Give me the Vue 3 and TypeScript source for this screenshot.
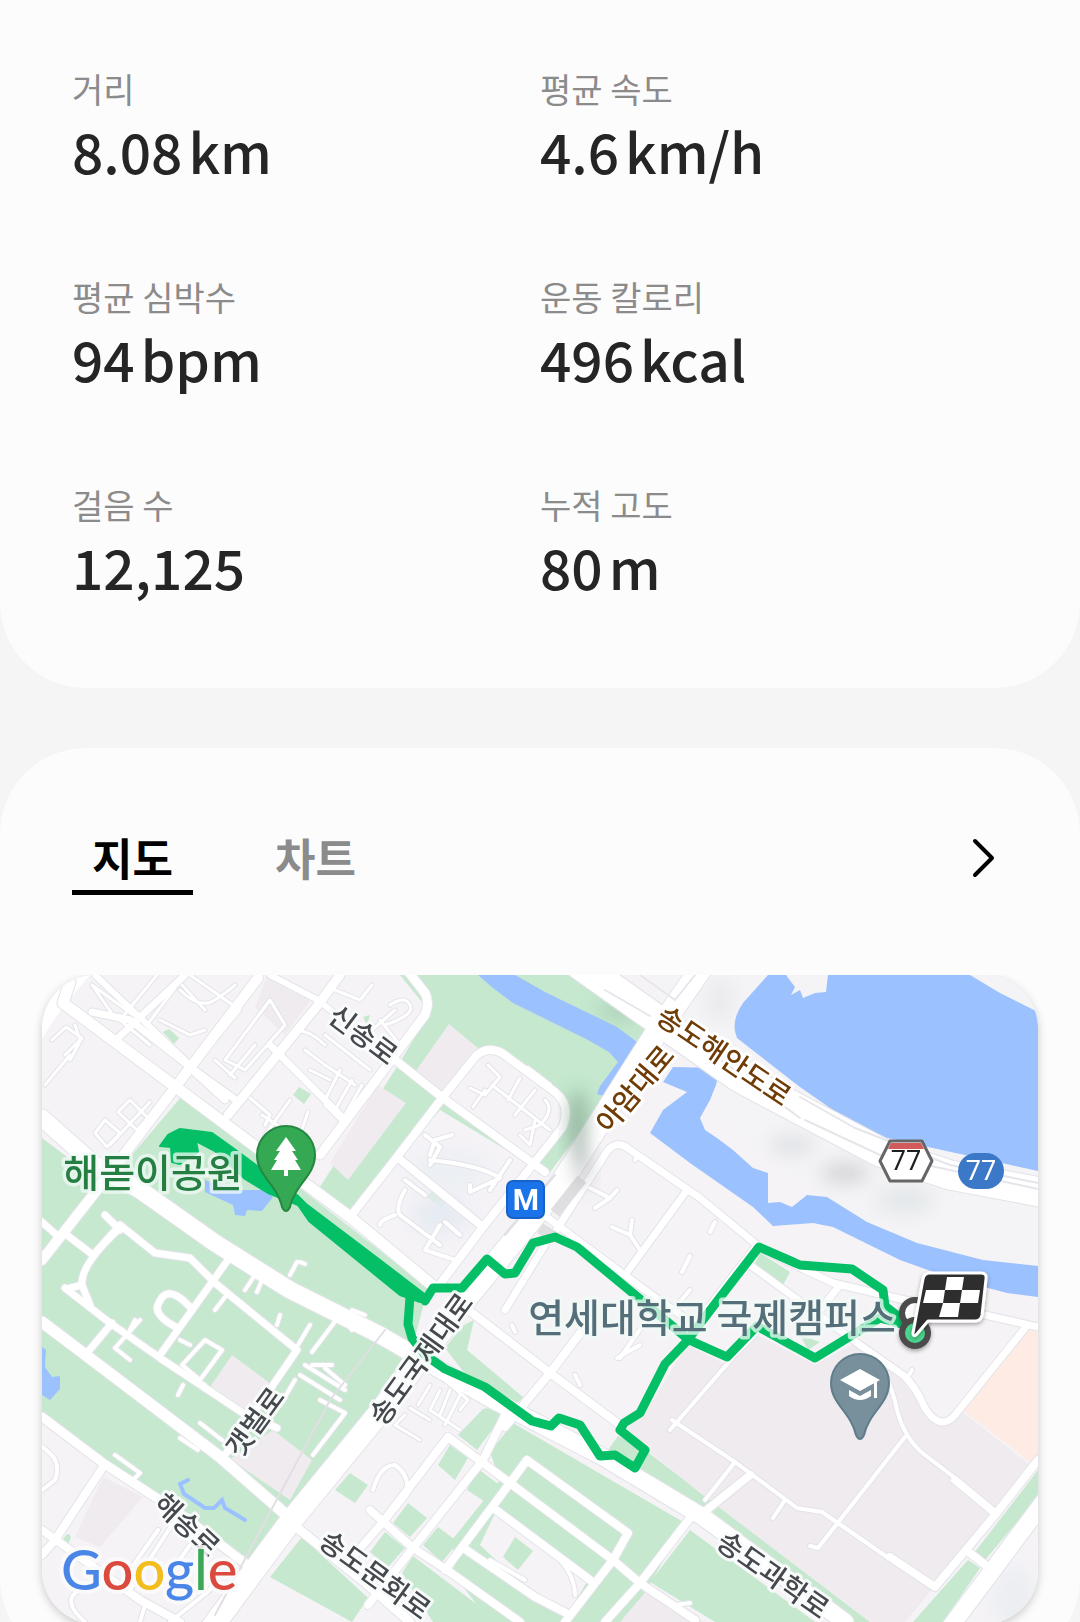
<script setup lang="ts">
import { ref } from 'vue'

interface Metric { label: string; value: string; unit?: string }
interface Road { d: string; w: number }
interface StreetLabel { text: string; x: number; y: number; angle: number; major?: boolean }

const metrics: Metric[] = [
  { label: '거리', value: '8.08', unit: 'km' },
  { label: '평균 속도', value: '4.6', unit: 'km/h' },
  { label: '평균 심박수', value: '94', unit: 'bpm' },
  { label: '운동 칼로리', value: '496', unit: 'kcal' },
  { label: '걸음 수', value: '12,125' },
  { label: '누적 고도', value: '80', unit: 'm' },
]

const tabs = ['지도', '차트']
const activeTab = ref('지도')

const greens: string[] = [
  'M400 975H590L655 1030L548 1175L440 1110L350 1214L318 1190L400 1062L430 1012Z',
  'M182 1096L428 1288L413 1345L290 1520L250 1567L42 1416V1138L95 1178L125 1163Z',
  'M445 1348L462 1326L474 1320L467 1350L523 1397L512 1410L470 1380Z',
  'M645 1450L870 1622H838L640 1482L608 1450L618 1436Z',
  'M483 1409Q490 1406 503 1415L477 1450L458 1435Z',
  'M513 1423L685 1523L628 1622L540 1622L448 1545L500 1480L490 1452Z',
  'M450 1445L468 1458L455 1480L438 1465ZM477 1468L502 1487L487 1503L467 1490ZM408 1503L427 1518L410 1537L393 1523ZM438 1527L458 1542L442 1562L423 1545ZM385 1532L405 1548L388 1567L370 1552Z',
  'M460 1551L565 1622H490L452 1572ZM413 1556L500 1622H433L402 1573Z',
  'M690 1530L815 1622H715L650 1582Z',
  'M302 1537L368 1598L352 1622L270 1577ZM350 1473L368 1485L355 1503L335 1490Z',
  'M1038 1470V1497L985 1560L975 1552ZM968 1560L980 1568L943 1622H913Z',
  'M163 1032L169 1029L179 1038L174 1044ZM299 1087L311 1094L304 1104L293 1095ZM433 1190L446 1200L442 1208L427 1197ZM363 1017L370 1015L367 1025Z',
  'M760 1253L790 1272L783 1285L754 1265ZM800 1335L820 1342L808 1350Z',
  'M63 1540Q68 1530 71 1537L68 1545L64 1550Z',
]

const blocks: string[] = [
  'M449 1024L478 1048L442 1096L415 1072Z',
  'M378 1085L406 1103L348 1180L330 1163Z',
  'M267 976L311 1000L285 1035L255 1007Z',
  'M232 1355L275 1387L248 1418L210 1387Z',
  'M273 1430L312 1460L290 1500L230 1459Z',
  'M103 1477L143 1497L100 1547L75 1537Z',
  'M687 1345L727 1365L757 1335L815 1365L860 1340L900 1377L935 1425L960 1410L1030 1465L930 1592L905 1622H870L700 1493L645 1448L625 1430L650 1405Z',
  'M647 1590L705 1622H620Z',
]

const lilacs: string[] = [
  'M443 1096L476 1054Q487 1045 502 1052L556 1092Q572 1106 562 1128L534 1166Z',
  'M495 1513L545 1545L588 1580L570 1610L530 1592L480 1545Z',
]

const roads: Road[] = [
  { d: 'M157 975L120 1020L150 1045M175 988L147 1025L92 985M92 985L115 1018M75 1025L80 1040L65 1055M52 1040L66 1027L82 1038L70 1060M70 1055L45 1085M150 1102L110 1145M130 1100L148 1118L137 1130L118 1112ZM105 1120L120 1133L107 1147L95 1133Z', w: 3 },
  { d: 'M190 975L240 1010L215 1040M182 985L205 1010M160 1020L190 1035L205 1030M270 1000L225 1060L245 1070L285 1025ZM215 1060L235 1078M180 990Q200 1010 215 1000T235 985M255 1045L230 1075M335 990L360 1000L372 985M295 1030Q310 1030 325 1045M305 1050L325 1065L355 1085M325 1035L370 1070M310 1070L330 1080M340 1070L325 1100M352 1080L335 1110M362 1085L345 1115', w: 3 },
  { d: 'M250 1098L270 1115L265 1125M290 1100L265 1135M262 1115L300 1140M308 1112L300 1135M325 1105L340 1120M390 1005Q405 995 410 1005T385 1025M395 1010L372 1030M380 1020L400 1045', w: 3 },
  { d: 'M488 1065L500 1077L485 1095L470 1088M492 1085L550 1130M520 1078L508 1100M535 1090L515 1115M545 1100Q555 1110 540 1125L525 1130M485 1090L473 1107M535 1120L530 1145L520 1135', w: 3 },
  { d: 'M425 1135L440 1147L430 1165M430 1160Q480 1165 500 1178M452 1135L435 1140L430 1155M500 1178L470 1192V1185M510 1160L490 1190M405 1190Q395 1208 400 1215L440 1245M405 1180L425 1195M395 1215Q380 1220 380 1225M440 1225L425 1250L455 1260M445 1222L460 1235', w: 4 },
  { d: 'M590 1188L610 1198L595 1208M610 1198L617 1190M612 1227L630 1235L640 1250M630 1235L632 1220M715 1222L710 1232M690 1256L682 1272M635 1160L638 1155', w: 4 },
  { d: 'M225 1297L215 1310M255 1275L245 1290M262 1280L257 1292M297 1262L290 1275M300 1262L305 1264M280 1315L277 1325M310 1325L298 1345M340 1315L312 1352M345 1320L352 1330M352 1310L365 1315M160 1360L205 1385M140 1320L115 1348L130 1360M135 1320L130 1330M205 1340L222 1350L200 1380L182 1365ZM180 1340L190 1345M183 1385L178 1395M300 1375L340 1400M305 1365L345 1390M312 1365L332 1365M325 1368L345 1385M295 1380L280 1405M345 1413L313 1455M320 1400L345 1413M200 1423L222 1440M180 1438L198 1450M115 1455L140 1473L133 1480', w: 4 },
  { d: 'M440 1390L430 1410L460 1430M450 1390L440 1415M460 1395L445 1425M430 1385L418 1405M405 1415L395 1425L420 1440M410 1408L430 1420M445 1380L468 1400L460 1410', w: 3 },
  { d: 'M373 1490Q380 1465 395 1465Q410 1475 407 1495L395 1510M520 1530L545 1545Q575 1570 575 1595M490 1560L525 1580M640 1345L617 1358M575 1375L580 1385M512 1325L515 1332M675 1605L690 1603', w: 4 },
  { d: 'M670 1313L690 1290M650 1315L620 1358M670 1430L735 1355L760 1330M672 1420L735 1462L797 1508L822 1512L887 1557M905 1437L840 1520L818 1548L810 1546M885 1375Q893 1390 897 1410Q905 1440 925 1455L955 1478M785 1500L773 1518M735 1462L705 1500M908 1377L912 1370', w: 4 },
  { d: 'M85 1622Q60 1600 80 1590M130 1570L158 1530M165 1580L190 1545M42 1447Q63 1460 55 1480L42 1490M130 1590L175 1520M220 1560L210 1590L170 1622M140 1622L145 1605M375 1330L340 1310', w: 4 },
  { d: 'M70 982L63 1003L177 1088L350 1217L432 1285', w: 11 },
  { d: 'M92 1012L130 1020L190 1067L236 1100M270 1045L342 1117M192 1070L225 1100', w: 7 },
  { d: 'M258 978L177 1085L97 1190L42 1260', w: 10 },
  { d: 'M340 975L318 1005L228 1115', w: 9 },
  { d: 'M185 975L118 1038', w: 7 },
  { d: 'M270 975L318 1000L355 1030M95 975L190 1065', w: 6 },
  { d: 'M403 965L425 993Q430 1002 425 1015L380 1075L320 1155', w: 9 },
  { d: 'M380 1048L443 1098L545 1172', w: 8 },
  { d: 'M350 1217L397 1157L443 1097L475 1057Q487 1045 502 1053L555 1092Q572 1106 562 1128L483 1227L437 1288M397 1157L483 1227', w: 8 },
  { d: 'M528 1068L550 1085', w: 4 },
  { d: 'M555 1232L608 1150Q617 1141 626 1147L700 1198L757 1245M548 1218L645 1290L685 1318M685 1193L625 1275M545 1245L505 1310', w: 7 },
  { d: 'M462 1305L550 1373L620 1425M590 1320L550 1373L505 1427', w: 8 },
  { d: 'M448 1437L510 1483L613 1560L640 1583L695 1620M370 1510L413 1548L447 1570L520 1622M505 1415L483 1460L413 1548L368 1605M448 1437L383 1522L350 1560M527 1460L510 1483L445 1570M527 1460L628 1533L613 1560L565 1622M492 1507L590 1580M462 1547L535 1597L570 1615M690 1518L640 1583L605 1622', w: 8 },
  { d: 'M42 1322L83 1353L220 1457L283 1512', w: 11 },
  { d: 'M42 1417L103 1463L175 1510L250 1567', w: 9 },
  { d: 'M65 1288L110 1323L163 1360L243 1413L277 1428M230 1257L160 1355M190 1307Q165 1280 157 1308Q158 1318 176 1327M112 1323L87 1353', w: 7 },
  { d: 'M63 1232L93 1255L120 1225L155 1253L190 1258L215 1283L297 1350L225 1455M120 1228Q80 1265 82 1285L70 1288M82 1285L90 1305M105 1215L120 1230M42 1222L60 1238', w: 7 },
  { d: 'M103 1467L55 1540L42 1555M42 1530L140 1600L180 1622', w: 8 },
  { d: 'M750 1265L860 1345L903 1375Q915 1385 925 1408Q940 1432 955 1415L1025 1328', w: 7 },
  { d: 'M757 1245L685 1338M757 1247L833 1283L905 1300L985 1315L1038 1327M840 1285L820 1310', w: 7 },
  { d: 'M1038 1460L995 1515L935 1587L890 1557M995 1513L955 1480M970 1553L988 1567M750 1475L703 1513', w: 8 },
  { d: 'M1045 1500L948 1630', w: 17 },
  { d: 'M42 1118L95 1165L140 1190L215 1243L290 1290L380 1335L487 1397L603 1457L703 1517L845 1622', w: 17 },
  { d: 'M707 960L655 1035L560 1185L463 1302L380 1412L290 1522L210 1630', w: 22 },
  { d: 'M290 1522L368 1585L410 1622', w: 9 },
  { d: 'M580 965L655 1018L740 1078L810 1115L880 1152L950 1175L1045 1193', w: 29 },
]

const route = 'M425 1301L433 1288L462 1288L487 1259L505 1274L515 1273L533 1243L555 1237L577 1247L640 1299L689 1340L727 1357L757 1326L815 1358L880 1318L912 1327L885 1306L883 1290L852 1269L800 1265L759 1247L718 1300L687 1341L665 1364L640 1413L624 1423L620 1430L645 1450L635 1468L615 1455L600 1456L580 1425L559 1418L551 1426L532 1421L485 1387L445 1369L425 1355L412 1338L408 1324L410 1297'
const routeBand = 'M160 1146L168 1135L180 1129L212 1133L233 1148L287 1188L297 1195L306 1204L380 1260L427 1296L420 1302L400 1295L309 1221L298 1205L268 1193L245 1179L215 1151L196 1141L198 1152L180 1164L172 1162L171 1147Z'

const streets: StreetLabel[] = [
  { text: '신송로', x: 363, y: 1035, angle: 37 },
  { text: '아암대로', x: 635, y: 1089, angle: -50, major: true },
  { text: '송도해안도로', x: 724, y: 1056, angle: 34, major: true },
  { text: '송도국제대로', x: 421, y: 1359, angle: -54 },
  { text: '갯벌로', x: 255, y: 1422, angle: -54 },
  { text: '해송로', x: 187, y: 1525, angle: 43 },
  { text: '송도문화로', x: 375, y: 1575, angle: 36 },
  { text: '송도과학로', x: 773, y: 1575, angle: 35 },
]
</script>

<template>
  <main class="page">
    <section class="card metrics-card">
      <dl class="metrics">
        <div v-for="m in metrics" :key="m.label" class="metric">
          <dt>{{ m.label }}</dt>
          <dd>{{ m.value }}<span v-if="m.unit" class="unit">{{ m.unit }}</span></dd>
        </div>
      </dl>
    </section>

    <section class="card map-card">
      <header class="bar">
        <div class="tabs" role="tablist">
          <button
            v-for="t in tabs"
            :key="t"
            type="button"
            role="tab"
            class="tab"
            :class="{ active: activeTab === t }"
            :aria-selected="activeTab === t"
            @click="activeTab = t"
          >{{ t }}</button>
        </div>
        <button type="button" class="more" aria-label="자세히">
          <svg viewBox="0 0 24 42" width="24" height="42" fill="none" stroke="#000" stroke-width="4" stroke-linecap="round" stroke-linejoin="round"><path d="M3 4L20 21L3 38" /></svg>
        </button>
      </header>

      <div class="map">
        <svg viewBox="42 975 996 649" role="img" aria-label="지도">
          <defs>
            <filter id="soft" x="-50%" y="-50%" width="200%" height="200%"><feGaussianBlur stdDeviation="9" /></filter>
            <filter id="drop" x="-30%" y="-30%" width="160%" height="160%"><feDropShadow dx="0" dy="2" stdDeviation="2" flood-opacity=".35" /></filter>
          </defs>
          <rect x="42" y="975" width="996" height="649" fill="#f6f3f7" />
          <path d="M655 975H1038V1300L900 1260L700 1100Z" fill="#f4f3f5" />
          <path v-for="d in greens" :key="d" :d="d" fill="#c5e8cf" />
          <path v-for="d in lilacs" :key="d" :d="d" fill="#f6f3f7" />
          <path d="M515 1537L533 1551L518 1570L503 1557Z" fill="#c5e8cf" />
          <path v-for="d in blocks" :key="d" :d="d" fill="#efebef" />
          <path d="M1027 1328L1038 1332V1462L1030 1462L963 1410Z" fill="#fdebe4" />

          <g filter="url(#soft)">
            <ellipse cx="620" cy="1010" rx="22" ry="12" fill="#9fc2ab" opacity=".5" />
            <ellipse cx="845" cy="1173" rx="24" ry="10" fill="#cfd0d4" opacity=".9" />
            <ellipse cx="792" cy="1145" rx="22" ry="9" fill="#dcdfe3" opacity=".9" />
            <ellipse cx="905" cy="1200" rx="28" ry="14" fill="#e3e8ea" />
            <ellipse cx="440" cy="1215" rx="30" ry="20" fill="#e6ebf2" />
            <ellipse cx="450" cy="1170" rx="38" ry="20" fill="#ebeff3" />
            <ellipse cx="720" cy="1000" rx="12" ry="20" fill="#e8e9eb" />
            <ellipse cx="1015" cy="1600" rx="22" ry="34" fill="#ebeef2" />
          </g>

          <g fill="#9cc1ff">
            <path d="M478 975H515L545 992L617 1027L645 1048L622 1074L604 1096L597 1094L600 1086L618 1062L609 1052L588 1040L513 1003L493 988Z" />
            <path d="M673 1067L720 1068L716 1085L710 1100L700 1118L705 1130L717 1138L733 1150L753 1168L768 1173V1203L780 1202L792 1207L807 1195L827 1197L867 1222L917 1243L983 1260L1038 1266V1297L1007 1293L950 1278L900 1260L833 1227L813 1223L773 1226L753 1207L700 1170L690 1163L650 1133L663 1110L687 1092L663 1082Z" />
            <path d="M768 975L743 1003Q730 1022 737 1038L800 1087L850 1122L887 1138L1038 1171V1012L1000 993L970 975Z" />
            <path d="M205 1180L228 1188L240 1190L265 1190L273 1197L262 1211L247 1210L245 1216L235 1215L233 1205L205 1192Z" />
            <path d="M42 1347L46 1350L45 1367L52 1377L60 1376V1389L50 1400L42 1395Z" />
          </g>
          <path d="M188 1480L180 1484L184 1494L205 1508L214 1508L222 1500L225 1508L245 1520" fill="none" stroke="#9cc1ff" stroke-width="4" stroke-linecap="round" />
          <path d="M786 975L795 987L791 995L800 990L803 998L815 993L826 992L828 975Z" fill="#f4f3f5" />
          <path d="M42 975H90L62 1008L42 1038Z" fill="#fff" />

          <g fill="none" stroke-linecap="round" stroke-linejoin="round">
            <path v-for="r in roads" :key="'c' + r.d" :d="r.d" :stroke-width="r.w + 2" stroke="#e3e3e9" />
            <path v-for="r in roads" :key="r.d" :d="r.d" :stroke-width="r.w" stroke="#fff" />
            <path d="M800 1097L855 1128L950 1165L1038 1183M805 1120L880 1155L1038 1189M605 990L650 1016M700 1045L800 1118M640 975L675 1000L695 975" stroke="#e6e5ec" stroke-width="2" />
            <path d="M555 1213L582 1179M540 1228L556 1238" stroke="#dfdfe1" stroke-width="11" stroke-linecap="butt" />
            <path d="M555 1175L505 1235M385 1330L330 1400L215 1615" stroke="#e2dfe4" stroke-width="2" />
          </g>
          <g filter="url(#soft)">
            <ellipse cx="578" cy="1125" rx="9" ry="36" fill="#6f8f7d" opacity=".6" />
            <ellipse cx="582" cy="1165" rx="8" ry="22" fill="#9b9da3" opacity=".5" />
          </g>

          <g fill="none" stroke="#05bf66" stroke-linejoin="round" stroke-linecap="round">
            <path :d="route" stroke-width="9" />
            <path :d="routeBand" fill="#05bf66" stroke-width="2" />
          </g>

          <g filter="url(#drop)" fill="#fff" stroke="#4b4b4b" stroke-width="6">
            <circle cx="915" cy="1313" r="13" />
            <circle cx="915" cy="1333" r="13" fill="#4bd98f" />
          </g>

          <g class="place">
            <text x="153" y="1187" fill="#257f43">해돋이공원</text>
            <text x="712" y="1332" fill="#546e7a">연세대학교 국제캠퍼스</text>
          </g>
          <text
            v-for="s in streets"
            :key="s.text"
            class="street"
            :class="{ major: s.major }"
            :transform="`translate(${s.x} ${s.y}) rotate(${s.angle})`"
            y="10"
          >{{ s.text }}</text>

          <g>
            <path d="M286 1126a29 29 0 0 1 29 29c0 21-20 29-25 52q-4 8-8 0c-5-23-25-31-25-52a29 29 0 0 1 29-29Z" fill="#34a853" stroke="#258842" stroke-width="2" />
            <path d="M286 1137L296 1151H292L298 1160H295L301 1170H288V1176H284V1170H271L277 1160H274L280 1151H276Z" fill="#fff" />
          </g>
          <g>
            <path d="M860 1354a29 29 0 0 1 29 29c0 21-20 29-25 52q-4 8-8 0c-5-23-25-31-25-52a29 29 0 0 1 29-29Z" fill="#78909c" stroke="#607d8b" stroke-width="2" />
            <path d="M860 1369L880 1380L860 1391L840 1380ZM849 1390L860 1396L871 1390V1396Q860 1404 849 1396ZM874 1382H877V1398H874Z" fill="#fff" />
          </g>

          <rect x="507" y="1181" width="37" height="37" rx="6" fill="#1a73e8" stroke="#1761c7" stroke-width="2" />
          <text x="526" y="1210" class="metro">M</text>

          <path d="M880 1161L890 1141H922L932 1161L922 1181H890Z" fill="#fff" stroke="#666" stroke-width="3" stroke-linejoin="round" />
          <path d="M891 1143H921L924 1149H888Z" fill="#d35a5a" />
          <text x="906" y="1170" class="shield" fill="#1f1f1f">77</text>
          <rect x="958" y="1153" width="46" height="36" rx="18" fill="#3b78c8" />
          <text x="981" y="1180" class="shield" fill="#fff">77</text>

          <g filter="url(#drop)">
            <path d="M930 1273H981Q987 1273 986 1279L982 1315Q981 1321 975 1321H928L916 1335Q913 1337 913 1333L923 1279Q924 1273 930 1273Z" fill="#2d2d2d" stroke="#fff" stroke-width="3" stroke-linejoin="round" />
            <path d="M947 1277H964L962 1290H945ZM926 1290H945L943 1303H923ZM962 1290H980L978 1303H960ZM943 1303H960L958 1317H939Z" fill="#fff" />
          </g>

          <text x="61" y="1590" class="google"><tspan fill="#4a86e8">G</tspan><tspan fill="#db4a3e">o</tspan><tspan fill="#f2bd1d">o</tspan><tspan fill="#4a86e8">g</tspan><tspan fill="#3ba757">l</tspan><tspan fill="#db4a3e">e</tspan></text>
        </svg>
      </div>
    </section>
  </main>
</template>

<style>
body {
  background: #f5f5f5;
}
</style>

<style scoped>
.page {
  height: 100vh;
  overflow: hidden;
  display: flex;
  flex-direction: column;
  gap: 60px;
  background: #f5f5f5;
  font-family: "Noto Sans CJK KR", "Noto Sans", sans-serif;
}
.card {
  flex: none;
  background: #fcfcfc;
}
.metrics-card {
  padding: 65px 72px 85px;
  border-radius: 0 0 86px 86px;
}
.metrics {
  margin: 0;
  display: grid;
  grid-template-columns: 1fr 1fr;
  row-gap: 86px;
}
.metric dt {
  font-size: 34px;
  line-height: 48px;
  color: #8b8b8b;
}
.metric dd {
  margin: 0;
  font-size: 55px;
  line-height: 74px;
  font-weight: 500;
  color: #252525;
}
.unit {
  margin-left: 6px;
}
.map-card {
  padding: 78px 42px 40px;
  border-radius: 86px;
}
.bar {
  display: flex;
  justify-content: space-between;
  align-items: flex-start;
  padding: 0 42px 0 30px;
  margin-bottom: 80px;
}
.tabs {
  display: flex;
  gap: 62px;
}
.tab,
.more {
  margin: 0;
  border: 0;
  background: none;
  font-family: inherit;
  cursor: pointer;
}
.tab {
  padding: 0 20px 2px;
  font-size: 44px;
  line-height: 62px;
  font-weight: 700;
  color: #8b8b8b;
  border-bottom: 5px solid transparent;
}
.tab.active {
  color: #000;
  border-bottom-color: #000;
}
.more {
  display: flex;
  align-items: center;
  height: 64px;
  padding: 0;
}
.map {
  border-radius: 54px;
  overflow: hidden;
  box-shadow: 0 3px 10px rgba(0, 0, 0, 0.2);
  clip-path: inset(0 -20px -20px -20px);
}
.map svg {
  display: block;
  width: 100%;
  height: auto;
}
.map text {
  text-anchor: middle;
  paint-order: stroke;
  stroke-linejoin: round;
}
.place text {
  font-size: 39px;
  font-weight: 500;
  stroke: rgba(240, 250, 245, 0.75);
  stroke-width: 7px;
}
.map .street {
  font-size: 28px;
  font-weight: 500;
  fill: #45484d;
  stroke: rgba(250, 252, 252, 0.9);
  stroke-width: 6px;
}
.map .street.major {
  fill: #703c06;
  stroke: #fff;
}
.map .metro {
  font-family: Roboto, sans-serif;
  font-size: 30px;
  font-weight: 700;
  fill: #fff;
}
.map .shield {
  font-family: Roboto, sans-serif;
  font-size: 27px;
}
.map .google {
  text-anchor: start;
  font-family: Lato, sans-serif;
  font-size: 56px;
  font-weight: 500;
  stroke: rgba(250, 250, 252, 0.85);
  stroke-width: 8px;
}
</style>
